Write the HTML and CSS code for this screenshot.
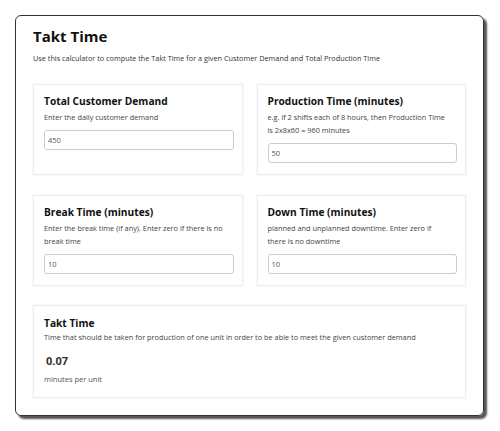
FILE: index.html
```html
<!DOCTYPE html>
<html lang="en">
<head>
    <meta charset="UTF-8">
    <meta name="viewport" content="width=device-width, initial-scale=1.0">
    <title>Takt Time</title>
    <link rel="stylesheet" href="styles.css">
</head>

<body>
    <div class="calc">
        <h1>Takt Time</h1>
        <p class="intro">Use this calculator to compute the Takt Time for a given Customer Demand and Total Production Time</p>

        <div class="fields">
            <div class="card">
                <h2>Total Customer Demand</h2>
                <p class="hint">Enter the daily customer demand</p>
                <input class="field" type="text" value="450">
            </div>
            <div class="card">
                <h2>Production Time (minutes)</h2>
                <p class="hint">e.g. if 2 shifts each of 8 hours, then Production Time is 2x8x60 = 960 minutes</p>
                <input class="field" type="text" value="50">
            </div>
            <div class="card">
                <h2>Break Time (minutes)</h2>
                <p class="hint">Enter the break time (if any). Enter zero if there is no break time</p>
                <input class="field" type="text" value="10">
            </div>
            <div class="card">
                <h2>Down Time (minutes)</h2>
                <p class="hint">planned and unplanned downtime. Enter zero if there is no downtime</p>
                <input class="field" type="text" value="10">
            </div>
        </div>

        <div class="card result">
            <h2>Takt Time</h2>
            <p class="hint">Time that should be taken for production of one unit in order to be able to meet the given customer demand</p>
            <div class="value">0.07</div>
            <div class="unit">minutes per unit</div>
        </div>
    </div>
</body>
</html>
```

FILE: styles.css
```css
body {
    margin: 0;
    padding: 15px 16px 15px 15px;
    background-color: #fff;
    font-family: "Open Sans", "DejaVu Sans", sans-serif;
    color: #111;
}

.calc {
    border: 1px solid #333;
    border-radius: 6px;
    box-shadow: 3px 3px 2px #555;
    padding: 9px 17px 17px 17px;
}

h1 {
    margin: 0;
    font-size: 15px;
    line-height: 22px;
    font-weight: 700;
}

.intro {
    margin: 5px 0 20px 0;
    font-size: 7.3px;
    line-height: 12px;
    color: #333;
}

.fields {
    display: grid;
    grid-template-columns: 1fr 1fr;
    column-gap: 14px;
    row-gap: 20px;
}

.card {
    background-color: #fff;
    border: 1px solid #eee;
    box-shadow: 0 0 2px rgba(0, 0, 0, 0.08);
    padding: 9px 8px 11px 10px;
}

.card h2 {
    margin: 0;
    font-size: 10.2px;
    line-height: 14px;
    font-weight: 700;
    color: #111;
}

.hint {
    margin: 3px 0 6px 0;
    padding-right: 10px;
    font-size: 7.35px;
    line-height: 13px;
    color: #444;
}

.field {
    display: block;
    box-sizing: border-box;
    width: 100%;
    height: 20px;
    margin: 0;
    padding: 0 3px;
    border: 1px solid #ccc;
    border-radius: 3px;
    font-family: "Open Sans", "DejaVu Sans", sans-serif;
    font-size: 7.5px;
    color: #555;
    outline: none;
}

.result {
    margin-top: 19px;
    padding-top: 10px;
    padding-bottom: 11px;
}

.result .hint {
    margin: 1px 0 9px 0;
}

.value {
    padding-left: 2px;
    font-size: 11px;
    line-height: 16px;
    font-weight: 700;
    color: #333;
}

.unit {
    margin-top: 3px;
    font-size: 7.5px;
    line-height: 14px;
    color: #555;
}
```
